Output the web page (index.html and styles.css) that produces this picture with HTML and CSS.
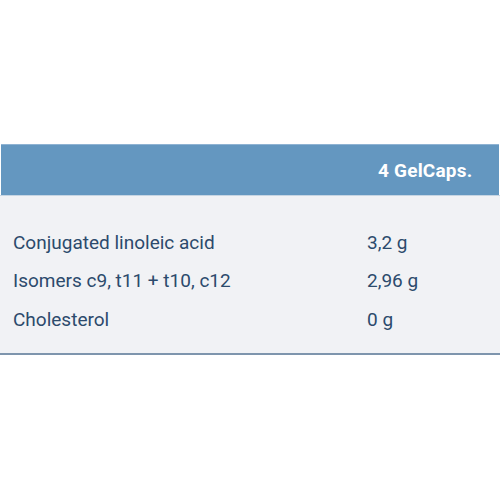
FILE: index.html
```html
<!DOCTYPE html>
<html>
<head>
<meta charset="utf-8">
<link rel="stylesheet" href="styles.css">
</head>
<body>
<div class="table">
  <div class="head">
    <span class="head-label">4 GelCaps.</span>
  </div>
  <div class="body">
    <div class="row"><span class="name">Conjugated linoleic acid</span><span class="val">3,2 g</span></div>
    <div class="row"><span class="name">Isomers c9, t11 + t10, c12</span><span class="val">2,96 g</span></div>
    <div class="row"><span class="name">Cholesterol</span><span class="val">0 g</span></div>
  </div>
</div>
</body>
</html>
```
FILE: styles.css
```css
html, body {
  margin: 0;
  padding: 0;
  background: #ffffff;
}
body {
  font-family: Roboto, "Liberation Sans", sans-serif;
}
.table {
  padding-top: 144px;
}
.head {
  margin: 0 1px 0 1px;
  height: 51px;
  background: #6497c0;
  border-top: 1px solid #8fb3d3;
  display: flex;
  align-items: center;
  padding-left: 377px;
  box-sizing: border-box;
}
.head-label {
  color: #ffffff;
  font-weight: 700;
  font-size: 19px;
  letter-spacing: 0.2px;
}
.body {
  background: #f1f2f5;
  border-top: 1px solid #c6d5e3;
  border-bottom: 2px solid #7e95ad;
  padding: 27px 0 20px 0;
  height: 160px;
  box-sizing: border-box;
}
.row {
  display: grid;
  grid-template-columns: 354px 1fr;
  padding-left: 13px;
  height: 38.5px;
  align-items: center;
  color: #2c4a6c;
  font-size: 19px;
}
```
